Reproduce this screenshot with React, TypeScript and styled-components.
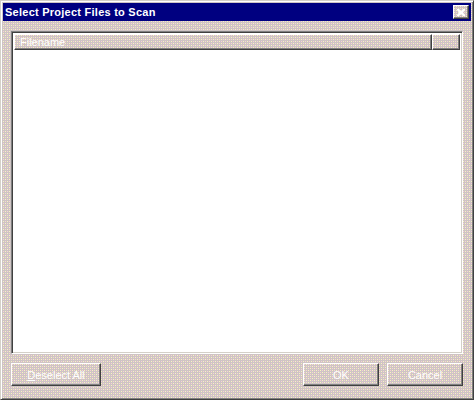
import React from 'react';
import styled, { createGlobalStyle } from 'styled-components';

const dither = `
  conic-gradient(from 270deg at 1px 1px, #f8d0d8 0 90deg, transparent 0) 0 0 / 4px 4px,
  conic-gradient(from 270deg at 1px 1px, #f8f4c0 0 90deg, transparent 0) 2px 0 / 4px 4px,
  conic-gradient(from 270deg at 1px 1px, #f8f4c0 0 90deg, transparent 0) 0 2px / 4px 4px,
  conic-gradient(from 270deg at 1px 1px, #f8d0d8 0 90deg, transparent 0) 2px 2px / 4px 4px,
  #cec4c4
`;

const GlobalStyle = createGlobalStyle`
  html, body {
    margin: 0;
    padding: 0;
    background: #fff;
  }
  * {
    box-sizing: border-box;
  }
`;

const Window = styled.div`
  width: 474px;
  height: 400px;
  display: flex;
  flex-direction: column;
  background: ${dither};
  border: 1px solid;
  border-color: #d4d0c8 #404040 #404040 #d4d0c8;
  box-shadow: inset 1px 1px 0 #fff, inset -1px -1px 0 #808080;
  padding: 2px;
  font-family: 'Liberation Sans', Arial, sans-serif;
  font-size: 11px;
`;

const TitleBar = styled.div`
  height: 18px;
  background: #000080;
  display: flex;
  align-items: center;
  justify-content: space-between;
  padding: 0 2px;
`;

const Title = styled.span`
  color: #fff;
  font-weight: bold;
  font-size: 11px;
  letter-spacing: 0.25px;
`;

const CloseButton = styled.div`
  width: 16px;
  height: 14px;
  background: ${dither};
  border: 1px solid;
  border-color: #fff #404040 #404040 #fff;
  box-shadow: inset -1px -1px 0 #808080;
  display: flex;
  align-items: center;
  justify-content: center;
`;

const Content = styled.div`
  flex: 1;
  display: flex;
  flex-direction: column;
  padding: 10px 8px 11px 8px;
  gap: 9px;
`;

const ListBox = styled.div`
  flex: 1;
  display: flex;
  flex-direction: column;
  background: #fff;
  border: 1px solid;
  border-color: #808080 #fff #fff #808080;
  box-shadow: inset 1px 1px 0 #404040, inset -1px -1px 0 #d4d0c8;
  padding: 2px;
`;

const Header = styled.div`
  display: flex;
  height: 16px;
`;

const HeaderCell = styled.div<{ $grow?: boolean }>`
  flex: ${(p) => (p.$grow ? 1 : '0 0 28px')};
  background: ${dither};
  border: 1px solid;
  border-color: #fff #404040 #404040 #fff;
  box-shadow: inset -1px -1px 0 #808080;
  color: #fff;
  padding: 1px 0 0 5px;
  line-height: 12px;
`;

const ButtonRow = styled.div`
  display: flex;
  height: 23px;
  gap: 8px;
`;

const Spacer = styled.div`
  flex: 1;
`;

const Button = styled.div<{ $w: number }>`
  width: ${(p) => p.$w}px;
  background: ${dither};
  border: 1px solid;
  border-color: #fff #404040 #404040 #fff;
  box-shadow: inset -1px -1px 0 #808080;
  color: #fff;
  display: flex;
  align-items: center;
  justify-content: center;
  u {
    text-decoration: underline;
  }
`;

export default function App() {
  return (
    <>
      <GlobalStyle />
      <Window>
        <TitleBar>
          <Title>Select Project Files to Scan</Title>
          <CloseButton>
            <svg width="8" height="7" viewBox="0 0 8 7">
              <path d="M0 0h2l2 2 2-2h2v1L6 3.5 8 6v1H6L4 5 2 7H0V6l2-2.5L0 1z" fill="#fff" />
            </svg>
          </CloseButton>
        </TitleBar>
        <Content>
          <ListBox>
            <Header>
              <HeaderCell $grow>Filename</HeaderCell>
              <HeaderCell />
            </Header>
          </ListBox>
          <ButtonRow>
            <Button $w={90}>
              <span>
                <u>D</u>eselect All
              </span>
            </Button>
            <Spacer />
            <Button $w={76}>OK</Button>
            <Button $w={76}>Cancel</Button>
          </ButtonRow>
        </Content>
      </Window>
    </>
  );
}
